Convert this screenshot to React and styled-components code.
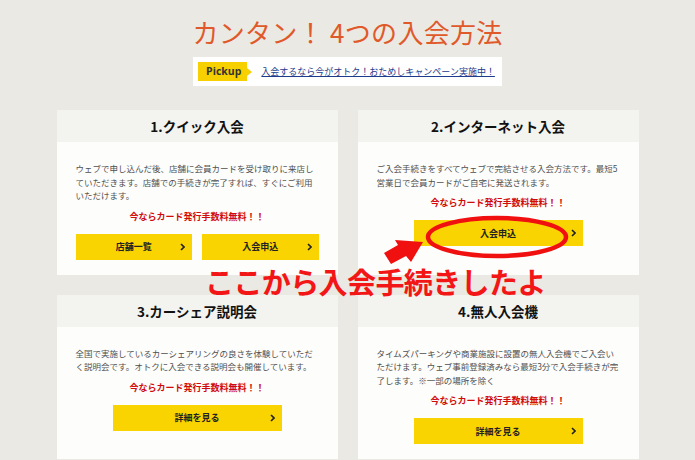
import React from "react";
import styled, { createGlobalStyle } from "styled-components";

const Global = createGlobalStyle`
  html, body { margin: 0; padding: 0; background: #ebe9e3; }
  body { font-family: "Noto Sans CJK JP", "Noto Sans", sans-serif; overflow: hidden; }
`;

const Page = styled.div`
  position: relative;
  width: 695px;
  height: 460px;
  overflow: hidden;
  display: flex;
  flex-direction: column;
  align-items: center;
  padding-top: 14px;
  box-sizing: border-box;
`;

const Title = styled.h1`
  margin: 0;
  font-size: 26px;
  line-height: 35px;
  font-weight: 400;
  color: #e0592a;
  letter-spacing: 0.3px;
`;

const Pickup = styled.div`
  margin-top: 8px;
  background: #fff;
  display: flex;
  align-items: center;
  padding: 5px 7px 5px 5px;
  gap: 9px;
`;

const PickLabel = styled.span`
  position: relative;
  background: #f7d000;
  color: #333;
  font-family: "Open Sans", "Noto Sans", sans-serif;
  font-weight: 700;
  font-size: 10.5px;
  height: 19px;
  line-height: 19px;
  padding: 0 6px 0 8px;
  margin-right: 5px;
  &::after {
    content: "";
    position: absolute;
    right: -5px;
    top: 6px;
    border-left: 5px solid #f7d000;
    border-top: 4px solid transparent;
    border-bottom: 4px solid transparent;
  }
`;

const PickLink = styled.a`
  color: #1d3a8c;
  font-size: 9px;
  line-height: 12px;
  text-decoration: underline;
  cursor: pointer;
`;

const Grid = styled.div`
  margin-top: 24px;
  display: grid;
  grid-template-columns: 281px 281px;
  gap: 20px;
`;

const Card = styled.section`
  background: #fdfdfb;
  display: flex;
  flex-direction: column;
`;

const CardHead = styled.h2`
  margin: 0;
  height: 32px;
  background: #f3f3ef;
  display: flex;
  align-items: center;
  justify-content: center;
  font-size: 13.5px;
  font-weight: 700;
  color: #111;
`;

const CardBody = styled.div`
  padding: 20px 19px 15px;
  display: flex;
  flex-direction: column;
`;

const Desc = styled.p`
  margin: 0;
  font-size: 8.5px;
  line-height: 13.5px;
  color: #4f4f4f;
  white-space: nowrap;
`;

const Offer = styled.p`
  margin: 7px 0 0;
  text-align: center;
  font-size: 9px;
  line-height: 14px;
  font-weight: 700;
  color: #d10a0a;
`;

const Buttons = styled.div`
  margin-top: 10px;
  display: flex;
  justify-content: center;
  gap: 10px;
`;

const Button = styled.a`
  position: relative;
  height: 26px;
  flex: ${(p) => (p.$wide ? "1 1 0" : "0 0 169px")};
  background: #fad400;
  display: flex;
  align-items: center;
  justify-content: center;
  font-size: 9px;
  font-weight: 700;
  color: #222;
  cursor: pointer;
`;

const Chevron = styled.svg`
  position: absolute;
  right: 7px;
  top: 9px;
`;

const Overlay = styled.svg`
  position: absolute;
  left: 0;
  top: 0;
  pointer-events: none;
`;

const Caption = styled.div`
  position: absolute;
  left: 205px;
  top: 263px;
  font-size: 29px;
  line-height: 36px;
  font-weight: 700;
  color: #f21616;
  letter-spacing: -0.6px;
  white-space: nowrap;
`;

const Btn = ({ children, wide }) => (
  <Button $wide={wide}>
    {children}
    <Chevron width="5" height="8" viewBox="0 0 5 8">
      <polyline points="1,1 4,4 1,7" fill="none" stroke="#222" strokeWidth="1.6" />
    </Chevron>
  </Button>
);

const offer = "今ならカード発行手数料無料！！";

const cards = [
  {
    title: "1.クイック入会",
    lines: [
      "ウェブで申し込んだ後、店舗に会員カードを受け取りに来店し",
      "ていただきます。店舗での手続きが完了すれば、すぐにご利用",
      "いただけます。",
    ],
    buttons: ["店舗一覧", "入会申込"],
  },
  {
    title: "2.インターネット入会",
    lines: [
      "ご入会手続きをすべてウェブで完結させる入会方法です。最短5",
      "営業日で会員カードがご自宅に発送されます。",
    ],
    buttons: ["入会申込"],
  },
  {
    title: "3.カーシェア説明会",
    lines: [
      "全国で実施しているカーシェアリングの良さを体験していただ",
      "く説明会です。オトクに入会できる説明会も開催しています。",
    ],
    buttons: ["詳細を見る"],
  },
  {
    title: "4.無人入会機",
    lines: [
      "タイムズパーキングや商業施設に設置の無人入会機でご入会い",
      "ただけます。ウェブ事前登録済みなら最短3分で入会手続きが完",
      "了します。※一部の場所を除く",
    ],
    buttons: ["詳細を見る"],
  },
];

export default function App() {
  return (
    <>
      <Global />
      <Page>
        <Title>カンタン！ 4つの入会方法</Title>
        <Pickup>
          <PickLabel>Pickup</PickLabel>
          <PickLink>入会するなら今がオトク！おためしキャンペーン実施中！</PickLink>
        </Pickup>
        <Grid>
          {cards.map((c) => (
            <Card key={c.title}>
              <CardHead>{c.title}</CardHead>
              <CardBody>
                <Desc>
                  {c.lines.map((l, i) => (
                    <React.Fragment key={i}>
                      {l}
                      {i < c.lines.length - 1 && <br />}
                    </React.Fragment>
                  ))}
                </Desc>
                <Offer>{offer}</Offer>
                <Buttons>
                  {c.buttons.map((b) => (
                    <Btn key={b} wide={c.buttons.length > 1}>
                      {b}
                    </Btn>
                  ))}
                </Buttons>
              </CardBody>
            </Card>
          ))}
        </Grid>
        <Overlay width="695" height="460" viewBox="0 0 695 460">
          <ellipse cx="497" cy="237" rx="69" ry="19" fill="none" stroke="#f01010" strokeWidth="4.5" />
          <polygon
            points="384,253 398,245 395,240 423,242 411,262 406,256 391,264"
            fill="#f01010"
          />
        </Overlay>
        <Caption>ここから入会手続きしたよ</Caption>
      </Page>
    </>
  );
}
